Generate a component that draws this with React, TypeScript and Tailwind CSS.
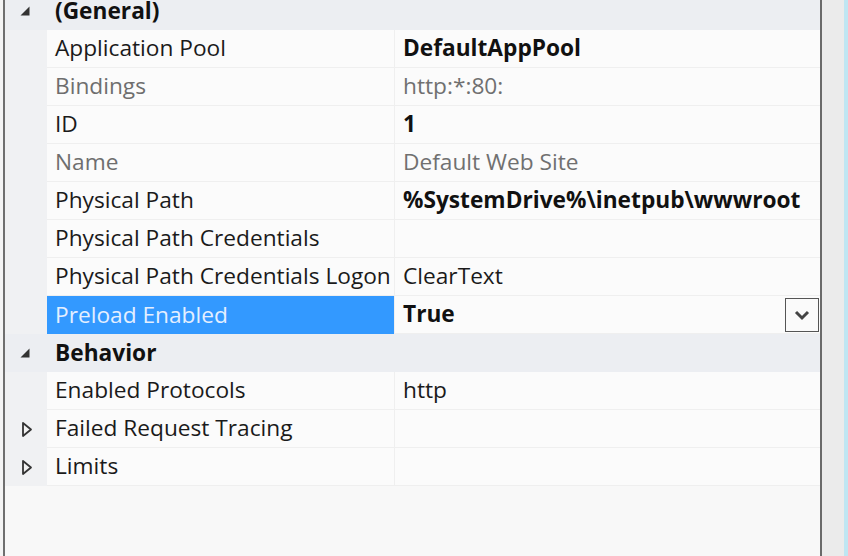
import React from 'react';

type Prop = {
  name: string;
  value?: string;
  nameMuted?: boolean;
  valueStyle?: 'bold' | 'muted' | 'normal';
  selected?: boolean;
  collapsed?: boolean;
};

type Section = { title: string; props: Prop[] };

const sections: Section[] = [
  {
    title: '(General)',
    props: [
      { name: 'Application Pool', value: 'DefaultAppPool', valueStyle: 'bold' },
      { name: 'Bindings', value: 'http:*:80:', nameMuted: true, valueStyle: 'muted' },
      { name: 'ID', value: '1', valueStyle: 'bold' },
      { name: 'Name', value: 'Default Web Site', nameMuted: true, valueStyle: 'muted' },
      { name: 'Physical Path', value: '%SystemDrive%\\inetpub\\wwwroot', valueStyle: 'bold' },
      { name: 'Physical Path Credentials', value: '' },
      { name: 'Physical Path Credentials Logon', value: 'ClearText', valueStyle: 'normal' },
      { name: 'Preload Enabled', value: 'True', valueStyle: 'bold', selected: true },
    ],
  },
  {
    title: 'Behavior',
    props: [
      { name: 'Enabled Protocols', value: 'http', valueStyle: 'normal' },
      { name: 'Failed Request Tracing', collapsed: true },
      { name: 'Limits', collapsed: true },
    ],
  },
];

function ExpandedGlyph() {
  return (
    <svg width="12" height="12" viewBox="0 0 12 12" className="shrink-0">
      <path d="M10.5 1.5 L10.5 10.5 L1.5 10.5 Z" fill="#333" />
    </svg>
  );
}

function CollapsedGlyph() {
  return (
    <svg width="12" height="17" viewBox="0 0 12 17" className="shrink-0">
      <path d="M2 2 L10 8.5 L2 15 Z" fill="#f2f2f2" stroke="#333" strokeWidth="1.8" strokeLinejoin="round" />
    </svg>
  );
}

function CategoryRow({ title }: { title: string }) {
  return (
    <div className="flex h-[38px] items-center bg-[#eceef2]">
      <div className="flex w-[42px] justify-center pr-[2px]">
        <ExpandedGlyph />
      </div>
      <div className="pl-[8px] font-bold text-[#111]">{title}</div>
    </div>
  );
}

function PropRow({ p }: { p: Prop }) {
  const valueClass =
    p.valueStyle === 'bold'
      ? 'font-bold text-[#111]'
      : p.valueStyle === 'muted'
      ? 'text-[#707070]'
      : 'text-[#1a1a1a]';
  return (
    <div className="flex h-[38px]">
      <div className="flex w-[42px] items-center justify-center bg-[#f0f1f3] pl-[2px]">
        {p.collapsed && <CollapsedGlyph />}
      </div>
      <div
        className={`flex w-[348px] items-center border-r border-[#efefef] pl-[8px] whitespace-nowrap ${
          p.selected ? 'bg-[#3399ff] text-[#e4efff]' : 'border-b ' + (p.nameMuted ? 'text-[#6e6e6e]' : 'text-[#1a1a1a]')
        }`}
      >
        {p.name}
      </div>
      <div className="flex flex-1 items-center border-b border-[#efefef] pl-[8px] whitespace-nowrap">
        <span className={`flex-1 ${valueClass}`}>{p.value}</span>
        {p.selected && (
          <div className="mr-[1px] flex h-[34px] w-[34px] items-center justify-center border border-[#555] bg-[#fafafa]">
            <svg width="16" height="12" viewBox="0 0 16 12">
              <path d="M2 3 L8 9 L14 3" fill="none" stroke="#444" strokeWidth="3" />
            </svg>
          </div>
        )}
      </div>
    </div>
  );
}

export default function App() {
  return (
    <div
      className="flex h-[556px] w-[848px] overflow-hidden bg-[#f7f7f7] text-[22.7px]"
      style={{ fontFamily: '"Open Sans", "Noto Sans", sans-serif' }}
    >
      <div className="w-[3px] bg-[#f4f4f4]" />
      <div className="w-[2px] bg-[#6f6f6f]" />
      <div className="flex w-[815px] flex-col overflow-hidden bg-[#f8f8f8]">
        <div className="-mt-[8px] flex flex-col bg-[#fbfbfb]">
          {sections.map((s) => (
            <React.Fragment key={s.title}>
              <CategoryRow title={s.title} />
              {s.props.map((p) => (
                <PropRow key={p.name} p={p} />
              ))}
            </React.Fragment>
          ))}
        </div>
      </div>
      <div className="w-[2px] bg-[#6a6a6a]" />
      <div className="w-[22px] bg-[#ebebeb]" />
      <div className="w-[4px] bg-[#bfe6f2]" />
    </div>
  );
}
